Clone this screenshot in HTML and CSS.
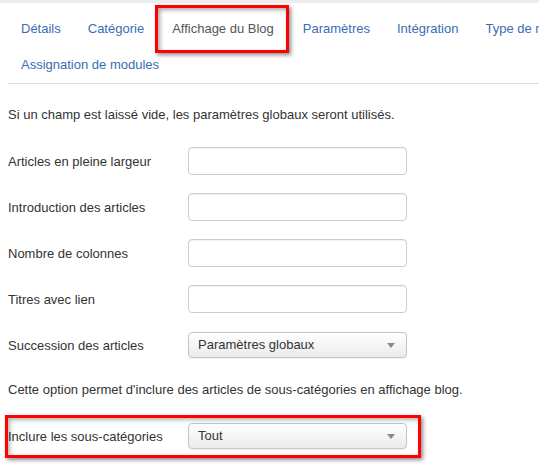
FILE: index.html
```html
<!DOCTYPE html>
<html lang="fr">
<head>
  <meta charset="UTF-8" />
  <title>Catégorie - Affichage du Blog</title>
  <link rel="stylesheet" href="styles.css">
</head>
<body>
  <div class="page">
    <ul class="tabs">
      <li class="tab">Détails</li>
      <li class="tab">Catégorie</li>
      <li class="tab active">Affichage du Blog</li>
      <li class="tab">Paramètres</li>
      <li class="tab">Intégration</li>
      <li class="tab">Type de mise en page</li>
      <li class="tab">Assignation de modules</li>
    </ul>

    <div class="form">
      <p class="info">Si un champ est laissé vide, les paramètres globaux seront utilisés.</p>

      <div class="row">
        <label>Articles en pleine largeur</label>
        <input type="text" class="field">
      </div>
      <div class="row">
        <label>Introduction des articles</label>
        <input type="text" class="field">
      </div>
      <div class="row">
        <label>Nombre de colonnes</label>
        <input type="text" class="field">
      </div>
      <div class="row">
        <label>Titres avec lien</label>
        <input type="text" class="field">
      </div>
      <div class="row">
        <label>Succession des articles</label>
        <div class="select">Paramètres globaux<span class="arrow"></span></div>
      </div>

      <p class="info">Cette option permet d'inclure des articles de sous-catégories en affichage blog.</p>

      <div class="row marked">
        <label>Inclure les sous-catégories</label>
        <div class="select">Tout<span class="arrow"></span></div>
      </div>
    </div>
  </div>
</body>
</html>
```

FILE: styles.css
```css
* {
  box-sizing: border-box;
}

html, body {
  overflow: hidden;
}

body {
  margin: 0;
  font-family: "Liberation Sans", Arial, sans-serif;
  font-size: 13px;
  color: #333;
  background: #fff;
  border-top: 3px solid #ececec;
}

.page {
  width: 720px;
}

/* TABS */
.tabs {
  list-style: none;
  margin: 8px 0 0 8px;
  padding: 0;
  width: 700px;
  display: flex;
  flex-wrap: wrap;
  border-bottom: 1px solid #ddd;
}

.tab {
  padding: 9px 14px 9px 13px;
  line-height: 18px;
  color: #3a6db3;
  white-space: nowrap;
}

.tab.active {
  position: relative;
  padding-left: 14px;
  padding-right: 16px;
  color: #555;
}

.tab.active::after {
  content: "";
  position: absolute;
  top: -6px;
  bottom: -6px;
  left: -3px;
  right: 1px;
  border: 3px solid #f00;
  box-shadow: 2px 2px 4px rgba(0, 0, 0, 0.45), inset 2px 2px 4px rgba(0, 0, 0, 0.35);
}

/* FORM */
.form {
  padding-left: 8px;
}

.info {
  margin: 22px 0 23px;
  line-height: 18px;
}

.row {
  display: flex;
  align-items: center;
  width: 399px;
  height: 28px;
  margin-bottom: 18px;
}

.row label {
  width: 180px;
}

.field {
  width: 219px;
  height: 28px;
  border: 1px solid #ccc;
  border-radius: 4px;
  box-shadow: inset 0 1px 1px rgba(0, 0, 0, 0.06);
  background: #fff;
}

.select {
  position: relative;
  width: 219px;
  height: 26px;
  line-height: 24px;
  padding-left: 9px;
  border: 1px solid #c4c4c4;
  border-radius: 4px;
  background: linear-gradient(#fff, #ebebeb);
  box-shadow: 0 1px 1px rgba(0, 0, 0, 0.05);
  color: #333;
}

.arrow {
  position: absolute;
  right: 11px;
  top: 10px;
  border-left: 4px solid transparent;
  border-right: 4px solid transparent;
  border-top: 5px solid #888;
}

.row.marked {
  position: relative;
}

.row.marked::after {
  content: "";
  position: absolute;
  top: -7px;
  bottom: -8px;
  left: -3px;
  right: -14px;
  border: 3px solid #f00;
  box-shadow: 2px 2px 4px rgba(0, 0, 0, 0.45), inset 2px 2px 4px rgba(0, 0, 0, 0.3);
}
```
